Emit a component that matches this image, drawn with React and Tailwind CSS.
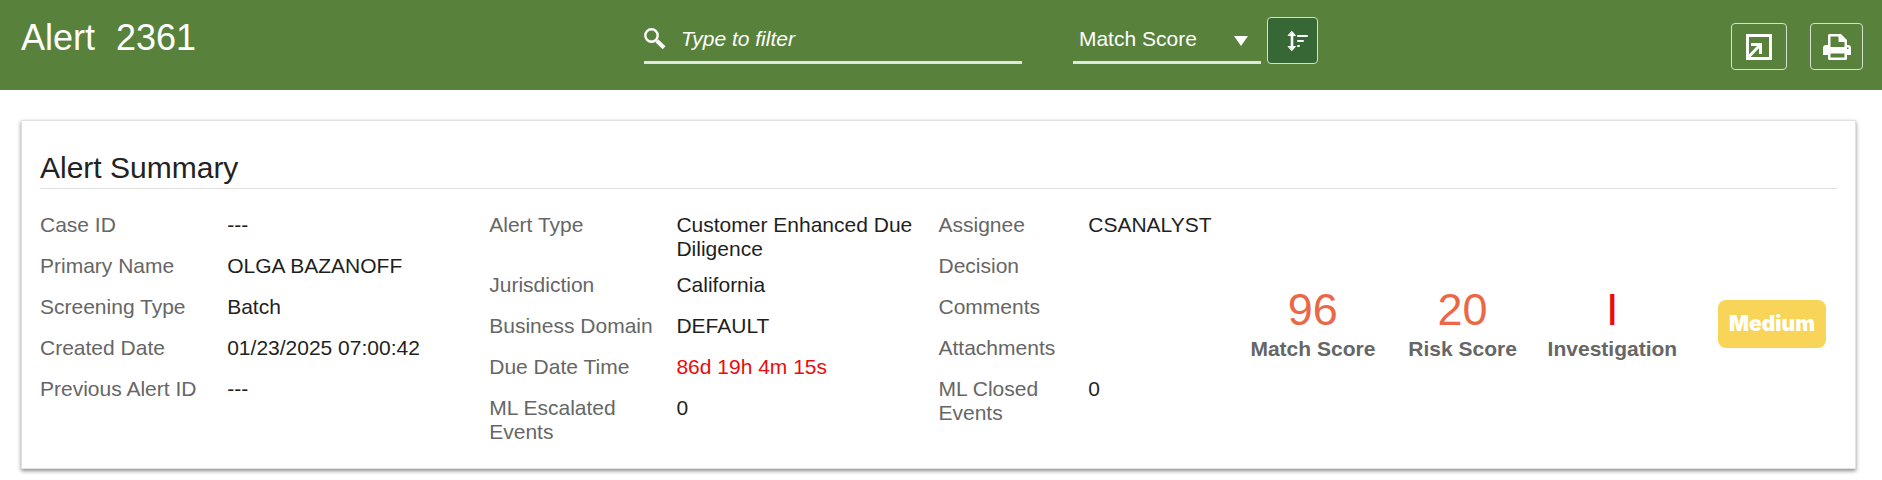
import React, { useState } from 'react';

const columns = [
    {
        span: "col-span-3",
        grid: "grid-cols-[5fr_7fr]",
        rows: [
            { label: 'Case ID', value: '---' },
            { label: 'Primary Name', value: 'OLGA BAZANOFF' },
            { label: 'Screening Type', value: 'Batch' },
            { label: 'Created Date', value: '01/23/2025 07:00:42' },
            { label: 'Previous Alert ID', value: '---' },
        ],
    },
    {
        span: "col-span-3",
        grid: "grid-cols-[5fr_7fr]",
        rows: [
            { label: 'Alert Type', value: 'Customer Enhanced Due Diligence' },
            { label: 'Jurisdiction', value: 'California' },
            { label: 'Business Domain', value: 'DEFAULT' },
            { label: 'Due Date Time', value: '86d 19h 4m 15s', overdue: true },
            { label: 'ML Escalated Events', value: '0' },
        ],
    },
    {
        span: "col-span-2",
        grid: "grid-cols-2",
        rows: [
            { label: 'Assignee', value: 'CSANALYST' },
            { label: 'Decision', value: '' },
            { label: 'Comments', value: '' },
            { label: 'Attachments', value: '' },
            { label: 'ML Closed Events', value: '0' },
        ],
    },
];

const scores = [
    { label: 'Match Score', value: '96', color: 'text-[#ea6846]' },
    { label: 'Risk Score', value: '20', color: 'text-[#ea6846]' },
    { label: 'Investigation', value: 'I', color: 'text-[#e80c0c]' },
];

const SearchIcon = () => (
    <svg width="22" height="22" viewBox="0 0 22 22" fill="none" stroke="currentColor" aria-hidden="true">
        <circle cx="7.5" cy="7.5" r="6.2" strokeWidth="2.4" />
        <path d="M12.8 12.8l7.3 7" strokeWidth="4" strokeLinecap="butt" />
    </svg>
);

const SortIcon = () => (
    <svg width="21" height="20" viewBox="0 0 21 20" fill="none" stroke="currentColor" strokeWidth="2" strokeLinecap="round" aria-hidden="true">
        <path d="M5 3v14" strokeWidth="2.6" />
        <path d="M5 0.500L8.500 4.500H1.500zM5 19.500L8.500 15.500H1.500z" fill="currentColor" strokeWidth="1" strokeLinejoin="round" />
        <path d="M11 5h9M11 10h5M11 15h1" />
    </svg>
);

const OpenIcon = () => (
    <svg width="26" height="26" viewBox="0 0 26 26" fill="none" stroke="currentColor" strokeWidth="3" aria-hidden="true">
        <path d="M1.500 1.500h23v23h-23z" />
        <path d="M3 22.500L14 11M5 10.500h9.500V20" />
    </svg>
);

const PrintIcon = () => (
    <svg width="28" height="26" viewBox="0 0 28 26" fill="currentColor" aria-hidden="true">
        <path fillRule="evenodd" d="M6.500 0H18l6 6v5h1a3 3 0 0 1 3 3v7h-4v3.500a1.500 1.500 0 0 1-1.500 1.500h-16A1.500 1.500 0 0 1 5 24.500V21H0v-7a3 3 0 0 1 3-3h2V1.500A1.500 1.500 0 0 1 6.500 0zM7.500 2.500V13h14V8h-6V2.500zM7.500 19.500v4h14v-4zM24 13.500v1.500h1.500v-1.500z" />
    </svg>
);

const AlertSummary = () => (
    <section className="mr-[26px] ml-[21px] border border-[#e2e2e2] bg-white px-[18px] pt-[29px] pb-6 shadow-[0_2px_4px_rgba(0,0,0,0.45)]">
        <h2 className="border-b border-[#dfdfdf] pb-[2px] text-[30px] leading-[36px] text-[#222]">Alert Summary</h2>
        <div className="mt-6 grid grid-cols-12">
            {columns.map((column, index) => (
                <dl key={index} className={`${column.span} flex flex-col gap-3`}>
                    {column.rows.map((row) => (
                        <div key={row.label} className={`grid min-h-[29px] ${column.grid}`}>
                            <dt className="pr-4 text-[#666]">{row.label}</dt>
                            <dd className={row.overdue ? 'text-[#e80c0c]' : 'text-[#1f1f1f]'}>{row.value}</dd>
                        </div>
                    ))}
                </dl>
            ))}
            <div className="col-span-4 grid grid-cols-4 items-center pb-[10px]">
                {scores.map((score) => (
                    <div key={score.label} className="pb-1 text-center">
                        <div className={`text-[45px] leading-[54px] ${score.color}`}>{score.value}</div>
                        <div className="font-bold text-[#666]">{score.label}</div>
                    </div>
                ))}
                <div className="flex justify-end pr-[11px]">
                    <span className="rounded-lg bg-[#f8d458] px-[11px] py-3 font-['Inter',sans-serif] text-[21px] leading-[24px] font-black text-white">Medium</span>
                </div>
            </div>
        </div>
    </section>
);

const App = () => {
    const [filter, setFilter] = useState('');
    const [sortBy, setSortBy] = useState('match');

    return (
        <div className="min-h-screen bg-white font-['Liberation_Sans',Arial,sans-serif] text-[21px] leading-[24px]">
            <header className="flex h-[90px] bg-[#58813c] pr-[19px] pl-[21px] text-white">
                <h1 className="flex flex-[8] gap-[21px] pt-[18px] text-[36px] leading-[40px]">
                    <span>Alert</span>
                    <span>2361</span>
                </h1>

                <div className="flex items-start pt-[17px]">
                    <label className="flex h-[47px] w-[378px] items-center gap-[15px] border-b-3 border-[#e0e7dc]">
                        <SearchIcon />
                        <input
                            type="text"
                            value={filter}
                            onChange={(e) => setFilter(e.target.value)}
                            placeholder="Type to filter"
                            aria-label="Type to filter"
                            className="min-w-0 flex-1 italic outline-none placeholder:text-white"
                        />
                    </label>

                    <div className="relative ml-[51px] h-[47px] w-[188px] border-b-3 border-[#e0e7dc]">
                        <select
                            value={sortBy}
                            onChange={(e) => setSortBy(e.target.value)}
                            aria-label="Sort by"
                            className="h-full w-full appearance-none pl-[6px] outline-none"
                        >
                            <option value="match">Match Score</option>
                            <option value="risk">Risk Score</option>
                        </select>
                        <svg className="pointer-events-none absolute top-[19px] right-[13px]" width="14" height="10" viewBox="0 0 14 10" fill="currentColor" aria-hidden="true">
                            <path d="M0 0h14L7 10z" />
                        </svg>
                    </div>

                    <button aria-label="Change sort order" className="ml-[6px] flex h-[47px] w-[51px] items-center justify-end rounded border border-[#d5e0d0] bg-[#366735] pr-[9px]">
                        <SortIcon />
                    </button>
                </div>

                <div className="flex flex-[7] items-start justify-end gap-[23px] pt-[23px]">
                    <button aria-label="Open in new window" className="flex h-[47px] w-[56px] items-center justify-center rounded border border-[#d5e0d0]">
                        <OpenIcon />
                    </button>
                    <button aria-label="Print" className="flex h-[47px] w-[53px] items-center justify-center rounded border border-[#d5e0d0]">
                        <PrintIcon />
                    </button>
                </div>
            </header>

            <main className="pt-[30px]">
                <AlertSummary />
            </main>
        </div>
    );
};

export default App;
